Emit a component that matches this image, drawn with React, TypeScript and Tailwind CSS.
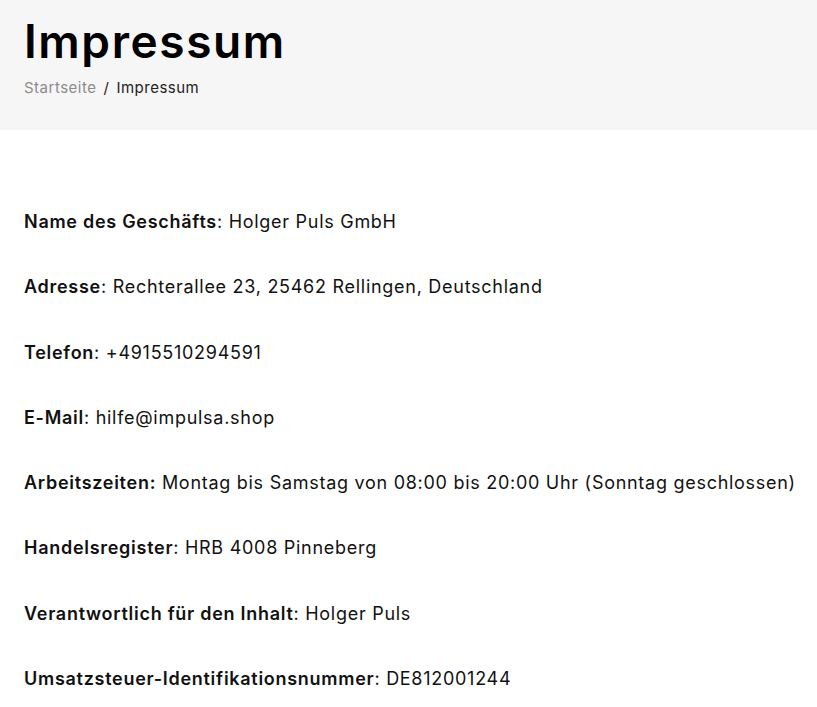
const rows: { label: string; value: string; colonInBold?: boolean }[] = [
  { label: "Name des Geschäfts", value: "Holger Puls GmbH" },
  { label: "Adresse", value: "Rechterallee 23, 25462 Rellingen, Deutschland" },
  { label: "Telefon", value: "+4915510294591" },
  { label: "E-Mail", value: "hilfe@impulsa.shop" },
  {
    label: "Arbeitszeiten",
    value: "Montag bis Samstag von 08:00 bis 20:00 Uhr (Sonntag geschlossen)",
    colonInBold: true,
  },
  { label: "Handelsregister", value: "HRB 4008 Pinneberg" },
  { label: "Verantwortlich für den Inhalt", value: "Holger Puls" },
  { label: "Umsatzsteuer-Identifikationsnummer", value: "DE812001244" },
]

export default function App() {
  return (
    <div className="min-h-screen bg-white font-['Inter',sans-serif] text-[#111]">
      <header className="h-[130px] bg-[#f6f6f6] px-6 pt-[11px]">
        <h1 className="text-[46px] font-semibold leading-[60px] tracking-[1.6px] text-black">Impressum</h1>
        <nav className="mt-[6px] flex items-center gap-[7px] text-[15px] tracking-[0.5px]">
          <span className="text-[#8c8c8c]">Startseite</span>
          <span className="text-[#222]">/</span>
          <span className="text-[#222]">Impressum</span>
        </nav>
      </header>

      <main className="flex flex-col gap-[33.3px] px-6 pt-[76px]">
        {rows.map((r) => (
          <p key={r.label} className="whitespace-nowrap text-[18px] leading-[32px] tracking-[0.72px]">
            {r.colonInBold ? (
              <strong className="font-semibold">{r.label}:</strong>
            ) : (
              <>
                <strong className="font-semibold">{r.label}</strong>:
              </>
            )}{" "}
            {r.value}
          </p>
        ))}
      </main>
    </div>
  )
}
